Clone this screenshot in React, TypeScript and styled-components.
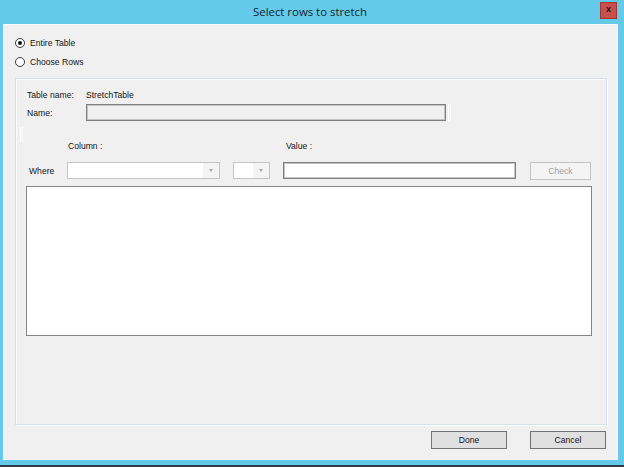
import React from "react";
import styled, { createGlobalStyle } from "styled-components";

const GlobalStyle = createGlobalStyle`
  html, body { margin: 0; padding: 0; background: #65c9e9; }
  * { box-sizing: border-box; }
  body { font-family: "Liberation Sans", Arial, sans-serif; }
`;

const Window = styled.div`
  width: 624px;
  height: 467px;
  background: #65c9e9;
  border-bottom: 2px solid #2f3d46;
  display: flex;
  flex-direction: column;
`;

const TitleBar = styled.div`
  height: 24px;
  flex: none;
  display: flex;
  align-items: flex-start;
`;

const Title = styled.div`
  flex: 1;
  padding-left: 20px;
  text-align: center;
  font-family: "Open Sans", "Noto Sans", sans-serif;
  font-size: 11.4px;
  line-height: 24px;
  color: #17252d;
`;

const CloseButton = styled.div`
  width: 17px;
  height: 17px;
  margin: 2px 7px 0 0;
  background: #c9504a;
  border: 1px solid #9a3a35;
  display: flex;
  align-items: center;
  justify-content: center;
  font-family: "Liberation Sans", Arial, sans-serif;
  font-weight: bold;
  font-size: 9px;
  line-height: 1;
  color: #1a1a1a;
  padding-bottom: 2px;
`;

const Client = styled.div`
  flex: 1;
  margin: 0 6px 5px 3px;
  background: #f0f0f0;
  border: 1px solid #f8f8f8;
  display: flex;
  flex-direction: column;
  font-family: "Liberation Sans", Arial, sans-serif;
  font-size: 8.6px;
  color: #151515;
`;

const RadioList = styled.div`
  padding: 8px 0 0 11px;
  display: flex;
  flex-direction: column;
`;

const RadioRow = styled.label`
  height: 19px;
  display: flex;
  align-items: center;
  gap: 5px;
`;

const RadioCircle = styled.span<{ $checked?: boolean }>`
  width: 10px;
  height: 10px;
  border-radius: 50%;
  border: 1px solid #3a3a3a;
  background: #fff;
  display: flex;
  align-items: center;
  justify-content: center;
  &::after {
    content: "";
    width: 4px;
    height: 4px;
    border-radius: 50%;
    background: ${(p) => (p.$checked ? "#111" : "transparent")};
  }
`;

const GroupBox = styled.div`
  margin: 7px 10px 0 11px;
  height: 347px;
  border: 1px solid #d8e0e5;
  box-shadow: 1px 1px 0 #fcfcfc, inset 1px 1px 0 #fcfcfc;
  display: flex;
  flex-direction: column;
`;

const InfoRow = styled.div<{ $top: number }>`
  margin-top: ${(p) => p.$top}px;
  padding-left: 11px;
  height: 17px;
  display: flex;
  align-items: center;
`;

const FieldLabel = styled.span`
  width: 59px;
  flex: none;
`;

const TextBox = styled.div<{ $width: number; $disabled?: boolean }>`
  width: ${(p) => p.$width}px;
  height: 17px;
  flex: none;
  background: ${(p) => (p.$disabled ? "#f0f0f0" : "#fff")};
  border: 1px solid #7e7e7e;
  box-shadow: inset 0 0 0 1px #c4c4c4;
`;

const GhostLine = styled.div<{ $height: number }>`
  width: 3px;
  height: ${(p) => p.$height}px;
  flex: none;
  border-left: 1px solid #ffffff;
  border-right: 1px solid #fbfbfb;
  background: #f3f3f3;
`;

const Spacer = styled.div`
  height: 18px;
  padding: 6px 0 0 4px;
`;

const HeaderRow = styled.div`
  margin-top: 0;
  padding-left: 52px;
  height: 14px;
  display: flex;
  align-items: center;
`;

const HeaderLabel = styled.span<{ $width?: number }>`
  width: ${(p) => (p.$width ? `${p.$width}px` : "auto")};
  flex: none;
`;

const WhereRow = styled.div`
  margin-top: 9px;
  padding-left: 13px;
  height: 18px;
  display: flex;
  align-items: flex-start;
`;

const WhereLabel = styled.span`
  width: 38px;
  flex: none;
  padding-top: 4px;
`;

const Combo = styled.div<{ $width: number; $gap: number }>`
  width: ${(p) => p.$width}px;
  height: 17px;
  margin-right: ${(p) => p.$gap}px;
  flex: none;
  border: 1px solid #c5c5c5;
  background: #f4f4f4;
  display: flex;
`;

const ComboField = styled.div`
  flex: 1;
  background: #ffffff;
`;

const ComboArrow = styled.div`
  width: 16px;
  flex: none;
  display: flex;
  align-items: center;
  justify-content: center;
  &::after {
    content: "";
    border-left: 2.5px solid transparent;
    border-right: 2.5px solid transparent;
    border-top: 3px solid #a8a8a8;
  }
`;

const ValueGap = styled.div`
  width: 14px;
  flex: none;
`;

const Button = styled.div<{ $disabled?: boolean; $width: number }>`
  width: ${(p) => p.$width}px;
  height: 18px;
  flex: none;
  border: 1px solid ${(p) => (p.$disabled ? "#c4c4c4" : "#737373")};
  background: ${(p) => (p.$disabled ? "#f4f4f4" : "#e0e0e0")};
  color: ${(p) => (p.$disabled ? "#a2a2a2" : "#151515")};
  display: flex;
  align-items: center;
  justify-content: center;
  font-size: 8.6px;
`;

const ListBox = styled.div`
  margin: 6px 0 0 10px;
  width: 566px;
  height: 150px;
  background: #fff;
  border: 1px solid #858585;
`;

const Footer = styled.div`
  margin: 6px 11px 0 0;
  display: flex;
  justify-content: flex-end;
  gap: 23px;
`;

export default function App() {
  return (
    <>
      <GlobalStyle />
      <Window>
        <TitleBar>
          <Title>Select rows to stretch</Title>
          <CloseButton>x</CloseButton>
        </TitleBar>
        <Client>
          <RadioList>
            <RadioRow>
              <RadioCircle $checked />
              <span>Entire Table</span>
            </RadioRow>
            <RadioRow>
              <RadioCircle />
              <span>Choose Rows</span>
            </RadioRow>
          </RadioList>
          <GroupBox>
            <InfoRow $top={7}>
              <FieldLabel>Table name:</FieldLabel>
              <span>StretchTable</span>
            </InfoRow>
            <InfoRow $top={1}>
              <FieldLabel>Name:</FieldLabel>
              <TextBox $width={360} $disabled />
              <GhostLine $height={18} style={{ marginLeft: 2 }} />
            </InfoRow>
            <Spacer>
              <GhostLine $height={15} />
            </Spacer>
            <HeaderRow>
              <HeaderLabel $width={218}>Column :</HeaderLabel>
              <HeaderLabel>Value :</HeaderLabel>
            </HeaderRow>
            <WhereRow>
              <WhereLabel>Where</WhereLabel>
              <Combo $width={153} $gap={13}>
                <ComboField />
                <ComboArrow />
              </Combo>
              <Combo $width={37} $gap={13}>
                <ComboField />
                <ComboArrow />
              </Combo>
              <TextBox $width={233} />
              <ValueGap />
              <Button $disabled $width={61}>Check</Button>
            </WhereRow>
            <ListBox />
          </GroupBox>
          <Footer>
            <Button $width={76}>Done</Button>
            <Button $width={76}>Cancel</Button>
          </Footer>
        </Client>
      </Window>
    </>
  );
}
